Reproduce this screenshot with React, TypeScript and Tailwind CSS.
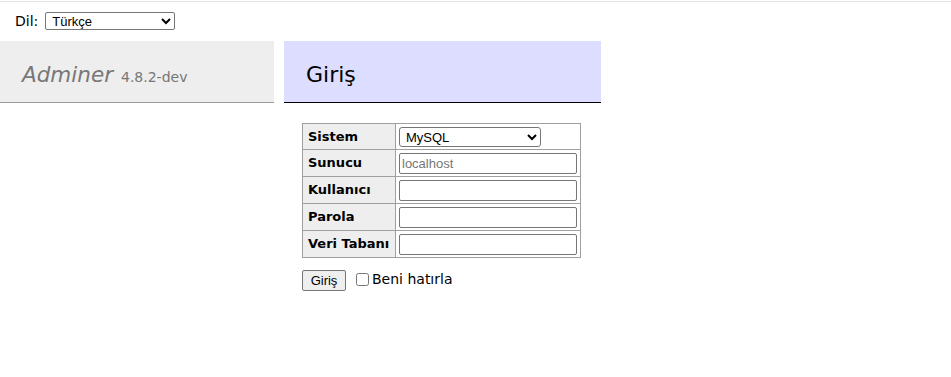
import { useState } from "react"

const FONT = "font-['Verdana','DejaVu_Sans',sans-serif]"

const ROWS = [
  { label: "Sunucu", placeholder: "localhost" },
  { label: "Kullanıcı", placeholder: "" },
  { label: "Parola", placeholder: "", type: "password" },
  { label: "Veri Tabanı", placeholder: "" },
]

export default function App() {
  const [remember, setRemember] = useState(false)

  return (
    <div className={`w-[951px] h-[377px] bg-white text-[14px] text-black ${FONT}`}>
      <div className="h-px bg-[#e3e3e3] mt-px" />

      <div className="flex items-center h-[39px] pl-[15px] pb-[1px]">
        <span className="mr-[7px]">Dil:</span>
        <select className="w-[130px] h-[18px] border border-[#767676] rounded-[2px] text-[13px] font-['Liberation_Sans',Arial,sans-serif] pl-[2px] bg-white">
          <option>Türkçe</option>
        </select>
      </div>

      <div className="flex gap-[10px]">
        <div className="w-[274px] h-[62px] bg-[#eeeeee] border-b border-[#999999] flex items-end pl-[22px] pb-[17px]">
          <span className="italic text-[21.5px] leading-none text-[#777777]">Adminer</span>
          <span className="text-[14px] leading-none text-[#777777] ml-[8px] mb-[1px]">4.8.2-dev</span>
        </div>

        <div className="flex flex-col">
          <div className="w-[317px] h-[62px] bg-[#ddddff] border-b border-black flex items-end pl-[22px] pb-[16px]">
            <h1 className="text-[22px] leading-none">Giriş</h1>
          </div>

          <div className="pl-[18px] pt-[20px]">
            <table className="border-collapse border border-[#a0a0a0]">
              <tbody>
                <tr className="h-[26px]">
                  <th className="bg-[#eeeeee] border border-[#a0a0a0] text-left font-bold text-[13px] px-[5px] w-[93px]">Sistem</th>
                  <td className="border border-[#a0a0a0] px-[3px]">
                    <select className="w-[142px] h-[20px] border border-[#767676] rounded-[3px] bg-white text-[13px] font-['Liberation_Sans',Arial,sans-serif] pl-[2px] align-middle">
                      <option>MySQL</option>
                    </select>
                  </td>
                </tr>
                {ROWS.map(r => (
                  <tr key={r.label} className="h-[27px]">
                    <th className="bg-[#eeeeee] border border-[#a0a0a0] text-left font-bold text-[13px] px-[5px] whitespace-nowrap">{r.label}</th>
                    <td className="border border-[#a0a0a0] px-[3px] w-[185px]">
                      <input
                        type={r.type ?? "text"}
                        placeholder={r.placeholder}
                        className="w-[178px] h-[21px] border border-[#767676] rounded-[2px] px-[2px] text-[13px] font-['Liberation_Sans',Arial,sans-serif] placeholder:text-[#777777] align-middle"
                      />
                    </td>
                  </tr>
                ))}
              </tbody>
            </table>

            <div className="flex items-center mt-[12px]">
              <button className="h-[21px] w-[44px] border border-[#767676] rounded-[2px] bg-[#efefef] text-[13px] font-['Liberation_Sans',Arial,sans-serif]">
                Giriş
              </button>
              <label className="flex items-center ml-[10px] -mt-[3px]">
                <input
                  type="checkbox"
                  checked={remember}
                  onChange={e => setRemember(e.target.checked)}
                  className="w-[13px] h-[13px] mr-[3px]"
                />
                Beni hatırla
              </label>
            </div>
          </div>
        </div>
      </div>
    </div>
  )
}
